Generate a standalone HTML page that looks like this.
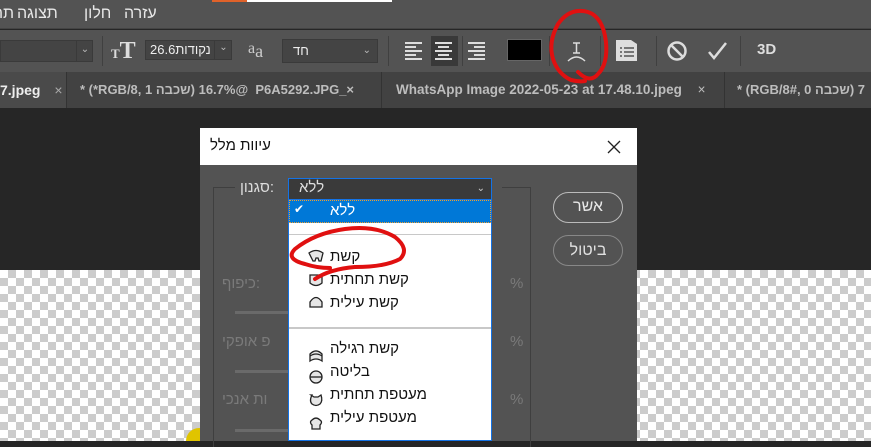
<!DOCTYPE html>
<html><head><meta charset="utf-8"><style>
*{margin:0;padding:0;box-sizing:border-box}
body{width:871px;height:441px;overflow:hidden;background:#262626;position:relative;font-family:"Liberation Sans","Noto Sans CJK SC",sans-serif;}
.a{position:absolute}
.menu{left:0;top:0;width:871px;height:29px;background:#535353;border-bottom:1px solid #444}
.menu span{position:absolute;top:5px;color:#e8e8e8;font-size:16px}
.opt{left:0;top:30px;width:871px;height:42px;background:#535353}
.tabs{left:0;top:72px;width:871px;height:36px;background:#424242}
.tab{position:absolute;top:0;height:36px;color:#bdbdbd;font-size:14px;font-weight:bold;line-height:36px;border-right:1px solid #333;white-space:nowrap;overflow:hidden}
.check{left:0;top:270px;width:871px;height:171px;background-color:#fff;background-image:linear-gradient(45deg,#ccc 25%,transparent 25%,transparent 75%,#ccc 75%),linear-gradient(45deg,#ccc 25%,transparent 25%,transparent 75%,#ccc 75%);background-size:16px 16px;background-position:0 0,8px 8px}
.dlg{left:200px;top:128px;width:437px;height:313px;background:#535353}
.title{left:0;top:0;width:437px;height:37px;background:#fff}
.lbl{color:#7a7a7a;font-size:15px;white-space:nowrap}
.item{position:absolute;left:41px;font-size:15px;color:#111;white-space:nowrap}
.sep{position:absolute;left:0;width:100%;height:2px;background:#c8c8c8}
</style></head><body>
<div class="a menu">
<div class="a" style="left:212px;top:0;width:35px;height:2px;background:#e0622a"></div>
<div class="a" style="left:247px;top:0;width:145px;height:2px;background:#fff"></div>
<span style="left:124px">עזרה</span><span style="left:84px">חלון</span><span style="left:17px">תצוגה</span><span style="left:-8px">תת</span>
</div>
<div class="a opt">
<div class="a" style="left:0;top:10px;width:93px;height:22px;background:#444;border:1px solid #3a3a3a"></div>
<div class="a" style="left:76px;top:10px;width:17px;height:22px;border-left:1px solid #3a3a3a;color:#bbb;font-size:10px;text-align:center;line-height:20px">⌄</div>
<div class="a" style="left:102px;top:6px;width:1px;height:30px;background:#404040"></div>
<div class="a" style="left:111px;top:8px;color:#ddd;font-family:'Liberation Serif',serif;font-size:24px;font-weight:bold"><span style="font-size:13px">T</span>T</div>
<div class="a" style="left:145px;top:10px;width:87px;height:20px;background:#444;border:1px solid #3a3a3a;color:#eee;font-size:13px;line-height:18px;padding-left:4px">26.6נקודות</div>
<div class="a" style="left:214px;top:10px;width:18px;height:20px;border-left:1px solid #3a3a3a;color:#bbb;font-size:10px;text-align:center;line-height:16px">⌄</div>
<div class="a" style="left:248px;top:7px;color:#ccc;font-family:'Liberation Serif',serif;font-size:16px">a<span style="font-size:18px;position:relative;top:4px">a</span></div>
<div class="a" style="left:282px;top:9px;width:96px;height:24px;background:#444;border:1px solid #3a3a3a;color:#eee;font-size:13px;line-height:22px;padding-left:10px">חד<span style="position:absolute;right:6px;font-size:10px;color:#bbb">⌄</span></div>
<div class="a" style="left:388px;top:6px;width:1px;height:30px;background:#404040"></div>
<div class="a" style="left:431px;top:6px;width:27px;height:30px;background:#393939"></div>
<svg class="a" style="left:400px;top:10px" width="95" height="22"><g stroke="#ddd" stroke-width="2">
<path d="M5 3h17M5 7h11M5 11h17M5 15h11M5 19h17"/><path d="M35 3h17M38 7h11M35 11h17M38 15h11M35 19h17"/><path d="M68 3h17M74 7h11M68 11h17M74 15h11M68 19h17"/></g></svg>
<div class="a" style="left:462px;top:6px;width:1px;height:30px;background:#404040"></div>
<div class="a" style="left:507px;top:9px;width:35px;height:22px;background:#000;border:1px solid #666"></div>
<div class="a" style="left:549px;top:6px;width:1px;height:30px;background:#404040"></div>
<svg class="a" style="left:565px;top:10px" width="24" height="24"><g stroke="#ddd" stroke-width="1.5" fill="none"><path d="M8 3h7M11.5 3v10M8 13h7"/><path d="M3 21q8.5-8 17 0"/></g></svg>
<div class="a" style="left:600px;top:6px;width:1px;height:30px;background:#404040"></div>
<svg class="a" style="left:615px;top:9px" width="24" height="24"><path d="M1 1h15l6 4v17H1z" fill="#ddd"/><g stroke="#535353" stroke-width="1.5"><path d="M5 9h2M9 9h10M5 13h2M9 13h10M5 17h2M9 17h10"/></g></svg>
<div class="a" style="left:656px;top:6px;width:1px;height:30px;background:#404040"></div>
<svg class="a" style="left:666px;top:10px" width="22" height="22"><circle cx="11" cy="11" r="8.5" stroke="#ddd" stroke-width="2.5" fill="none"/><path d="M5 5l12 12" stroke="#ddd" stroke-width="2.5"/></svg>
<svg class="a" style="left:706px;top:10px" width="22" height="22"><path d="M3 12l5 6L20 3" stroke="#ddd" stroke-width="2.5" fill="none"/></svg>
<div class="a" style="left:740px;top:6px;width:1px;height:30px;background:#404040"></div>
<div class="a" style="left:757px;top:11px;color:#ddd;font-size:15px;font-weight:bold">3D</div>
</div>
<div class="a tabs">
<div class="tab" style="left:0;width:67px;background:#4a4a4a;color:#eee">7.jpeg <span style="font-weight:normal;color:#aaa;margin-left:10px">×</span></div>
<div class="tab" style="left:67px;width:315px;padding-left:13px;font-size:13px">* (*RGB/8, 1 שכבה) 16.7%@ &nbsp;P6A5292.JPG_×</div>
<div class="tab" style="left:382px;width:343px;padding-left:14px;font-size:13.5px">WhatsApp Image 2022-05-23 at 17.48.10.jpeg <span style="font-weight:normal;margin-left:12px">×</span></div>
<div class="tab" style="left:725px;width:160px;padding-left:12px;border-right:none;font-size:13px">* (RGB/8#, 0 שכבה) 7</div>
</div>
<div class="a check"></div>
<div class="a" style="left:186px;top:428px;width:16px;height:13px;background:#e0c400;border-radius:14px 0 0 0"></div>
<div class="a dlg">
<div class="a title"><span class="a" style="left:10px;top:9px;font-size:15px;color:#111">עיוות מלל</span>
<svg class="a" style="left:407px;top:12px" width="14" height="14"><path d="M1 1l12 12M13 1L1 13" stroke="#222" stroke-width="1.3"/></svg></div>
<div class="a" style="left:13px;top:59px;width:22px;height:1px;background:#3f3f3f"></div>
<div class="a" style="left:13px;top:59px;width:1px;height:260px;background:#3f3f3f"></div>
<div class="a" style="left:302px;top:59px;width:28px;height:1px;background:#3f3f3f"></div>
<div class="a" style="left:330px;top:59px;width:1px;height:260px;background:#3f3f3f"></div>
<div class="a" style="left:40px;top:51px;color:#ddd;font-size:15px">סגנון:</div>
<div class="a lbl" style="left:22px;top:147px">כיפוף:</div>
<div class="a lbl" style="left:22px;top:205px">פ אופקי</div>
<div class="a lbl" style="left:22px;top:263px">ות אנכי</div>
<div class="a" style="left:35px;top:183px;width:60px;height:3px;background:#6a6a6a"></div>
<div class="a" style="left:35px;top:242px;width:60px;height:3px;background:#6a6a6a"></div>
<div class="a" style="left:35px;top:301px;width:60px;height:3px;background:#6a6a6a"></div>
<div class="a lbl" style="left:310px;top:147px">%</div>
<div class="a lbl" style="left:310px;top:205px">%</div>
<div class="a lbl" style="left:310px;top:263px">%</div>
<div class="a" style="left:353px;top:64px;width:70px;height:31px;border:1.5px solid #bbb;border-radius:16px;color:#e8e8e8;font-size:16px;text-align:center;line-height:28px">אשר</div>
<div class="a" style="left:353px;top:107px;width:70px;height:31px;border:1px solid #888;border-radius:16px;color:#e0e0e0;font-size:16px;text-align:center;line-height:29px">ביטול</div>
<div class="a" style="left:88px;top:50px;width:204px;height:22px;background:#3a3a3a;border:1px solid #1473e6;color:#ddd;font-size:15px;line-height:18px;padding-left:10px">ללא<span style="position:absolute;right:6px;font-size:10px;color:#ccc;top:1px">⌄</span></div>
<div class="a" style="left:88px;top:71px;width:204px;height:242px;background:#fff;border:1px solid #1473e6">
<div class="a" style="left:0;top:0;width:202px;height:23px;background:#0078d7;border:1px dotted #f0a030;color:#fff;font-size:15px"><span class="a" style="left:4px;top:1px;font-size:12px">✔</span><span class="a" style="left:40px;top:1px">ללא</span></div>
<div class="sep" style="top:34px;height:1px"></div>
<div class="sep" style="top:127px"></div>
<div class="item" style="top:48px">קשת</div>
<div class="item" style="top:71px">קשת תחתית</div>
<div class="item" style="top:94px">קשת עילית</div>
<div class="item" style="top:140px">קשת רגילה</div>
<div class="item" style="top:163px">בליטה</div>
<div class="item" style="top:186px">מעטפת תחתית</div>
<div class="item" style="top:209px">מעטפת עילית</div>
<svg class="a" style="left:18px;top:48px" width="20" height="185"><g stroke="#222" stroke-width="1.3" fill="#e6e6e6">
<path d="M2 5q7-5 14 0l-2 8h-2l-1-3h-2l-1 3h-2z"/>
<path d="M3 27v8q6 5 12 0v-8z"/>
<path d="M3 59v-5q6-9 12 0v5z"/>
<path d="M3 113v-7q6-6 12 0v7q-6-4-12 0z M3 108q6-4 12 0"/>
<circle cx="9" cy="129" r="6"/><path d="M3 129h12"/>
<path d="M4 147l3 2h4l3-2q2 6-1 9q-4 3-8 0q-3-3 0-9z"/>
<path d="M5 172q4-4 8 0q3 2 0 5v4h-8v-4q-3-3 0-5z"/>
</g></svg>
</div>
</div>
<svg class="a" style="left:0;top:0" width="871" height="441"><g stroke="#e01010" stroke-width="4" fill="none" stroke-linecap="round">
<path d="M578 72q12 12 20 2q10-10 8-32q-3-25-18-30q-18-5-30 12q-10 18-5 35q5 15 18 21q8 2 14 1"/>
<path d="M315 279q15-10 40-12q30 0 45-8q10-10-5-22q-20-12-50-8q-30 4-50 20q-10 10 10 15q12 4 25 4"/>
</g></svg>
</body></html>
